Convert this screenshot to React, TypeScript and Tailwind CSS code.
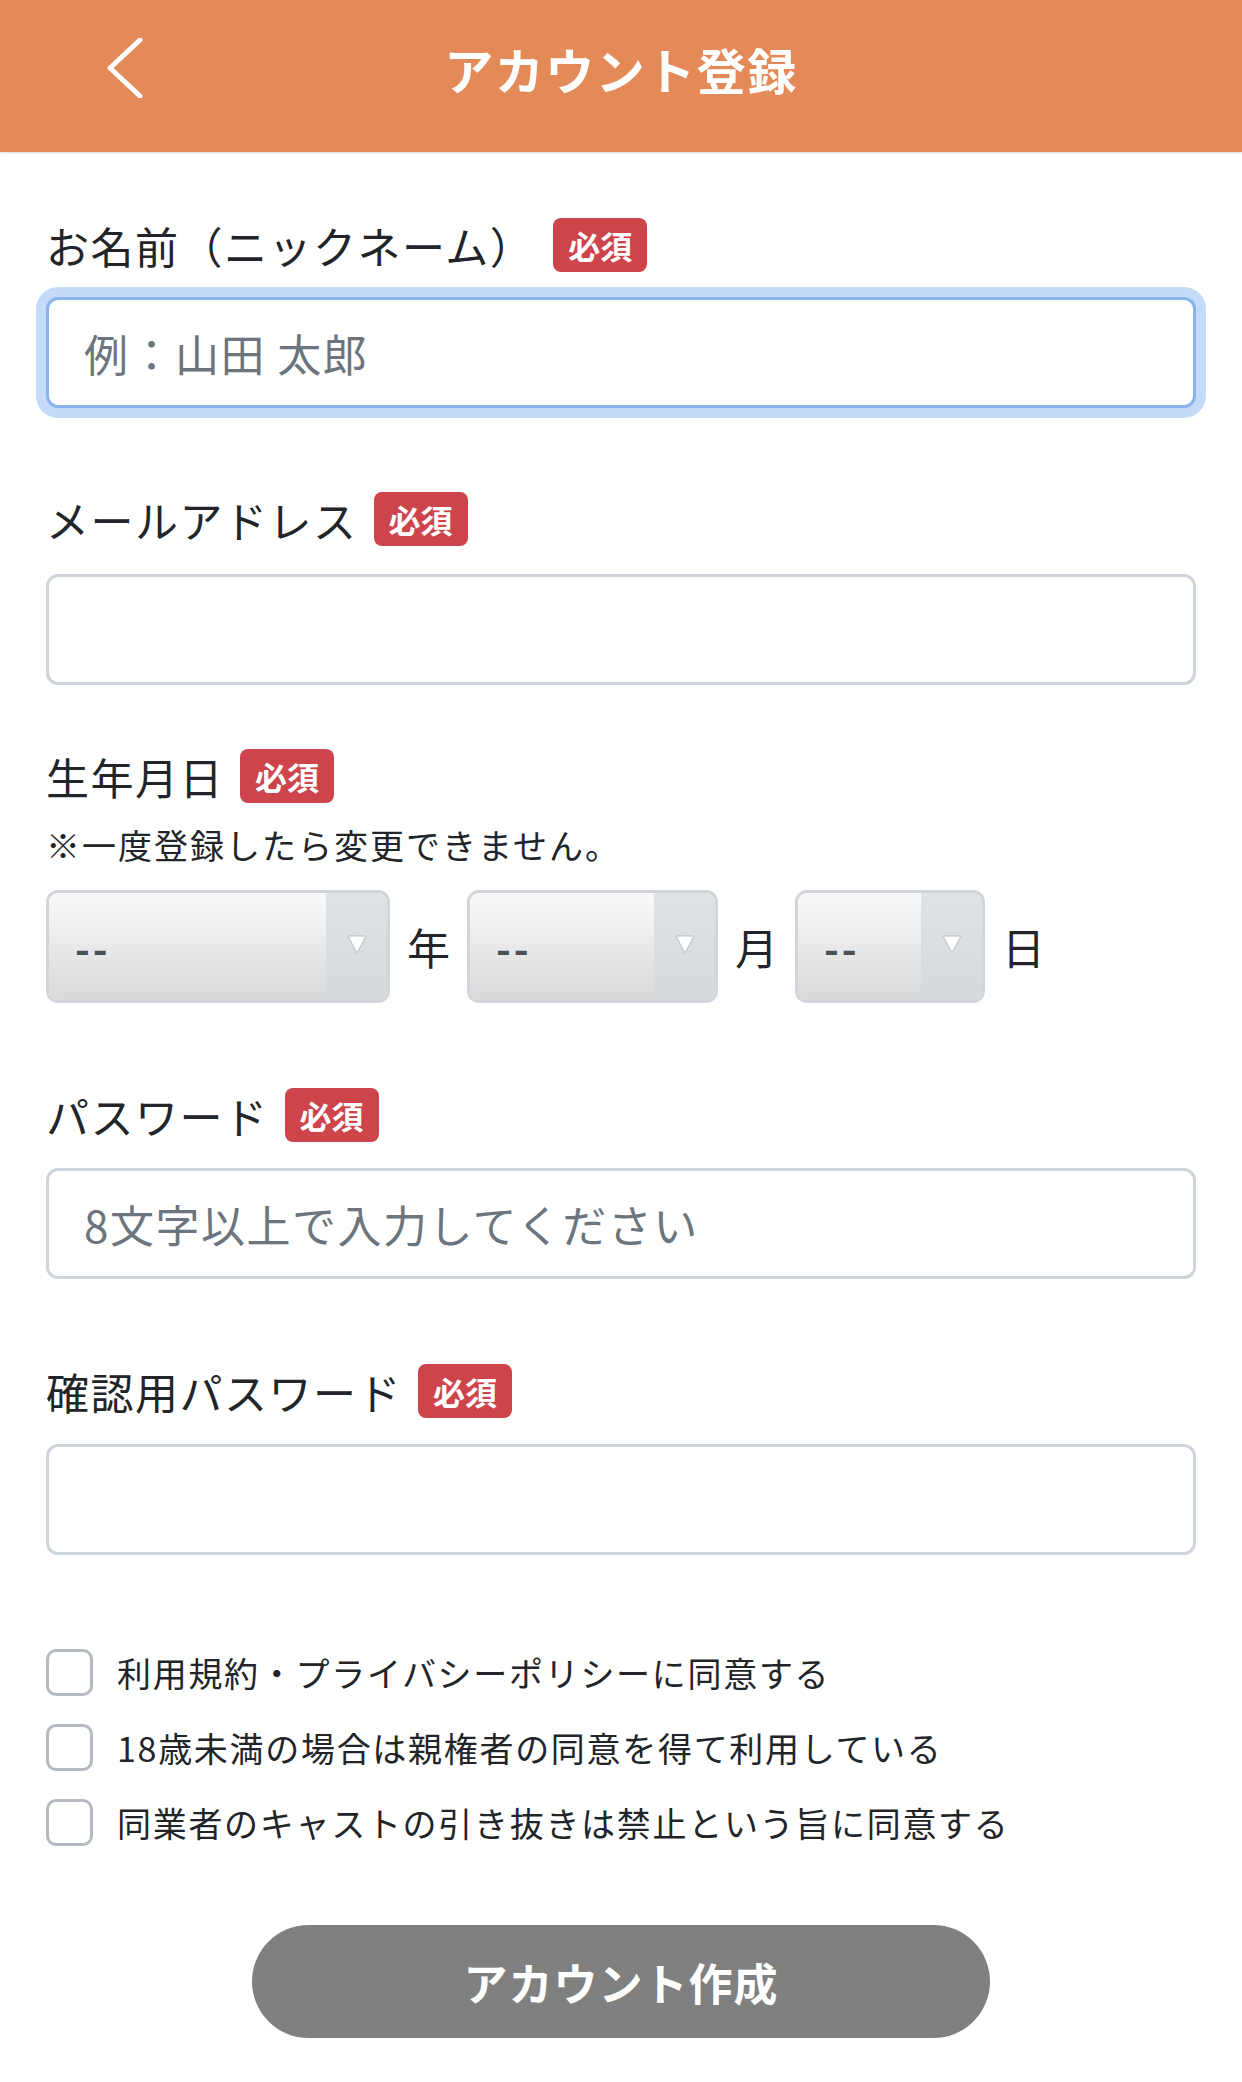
import React from 'react';

const font = "font-['Noto_Sans_CJK_JP','Noto_Sans',sans-serif]";

function Badge() {
  return (
    <span className="flex h-[54px] items-center rounded-[8px] bg-[#cd444b] px-[15px] text-[32px] font-bold leading-none text-white">
      必須
    </span>
  );
}

function Label({ text, extra }: { text: string; extra?: string }) {
  return (
    <div className="flex h-[54px] items-center gap-[16px]">
      <span className="text-[43px] leading-none tracking-[1.5px] text-[#212529]">{text}</span>
      <span className={extra}>
        <Badge />
      </span>
    </div>
  );
}

function TextInput({ placeholder, focused }: { placeholder?: string; focused?: boolean }) {
  return (
    <input
      type="text"
      placeholder={placeholder}
      className={
        focused
          ? 'h-[111px] w-full rounded-[12px] border-[3px] border-[#8ab4ee] bg-white px-[35px] text-[44px] tracking-[1.5px] text-[#212529] shadow-[0_0_0_10px_#c4dcfa] outline-none placeholder:text-[#6c757d]'
          : 'h-[111px] w-full rounded-[12px] border-[3px] border-[#ced4da] bg-white px-[35px] text-[44px] tracking-[1.5px] text-[#212529] outline-none placeholder:text-[#6c757d]'
      }
    />
  );
}

function Select({ width }: { width: string }) {
  return (
    <div className={`flex h-[113px] overflow-hidden rounded-[12px] border-[3px] border-[#d2d6db] ${width}`}>
      <div className="flex flex-1 items-center bg-gradient-to-b from-[#fafafa] to-[#d9d9d9] pl-[26px]">
        <span className="text-[40px] font-bold leading-none tracking-[3px] text-[#495057]">--</span>
      </div>
      <div className="flex w-[61px] items-start justify-center bg-gradient-to-b from-[#dfe2e6] to-[#d5d8dc] pt-[40px]">
        <svg width="22" height="22" viewBox="0 0 22 22">
          <path d="M2 3 L20 3 L11 20 Z" fill="#ffffff" stroke="#b9bec5" strokeWidth="1" strokeLinejoin="round" />
        </svg>
      </div>
    </div>
  );
}

function Check({ text }: { text: string }) {
  return (
    <label className="flex h-[47px] items-center gap-[24px]">
      <span className="h-[47px] w-[47px] shrink-0 rounded-[10px] border-[3px] border-[#b5bac1] bg-white" />
      <span className="text-[34px] leading-none tracking-[1.7px] text-[#212529]">{text}</span>
    </label>
  );
}

export default function App() {
  return (
    <div className={`min-h-[2082px] w-[1242px] bg-white ${font}`}>
      <header className="grid h-[152px] grid-cols-[1fr_auto_1fr] items-center bg-[#e48a58] pb-[16px] shadow-[0_1px_2px_rgba(0,0,0,0.15)]">
        <div className="pl-[104px]">
          <svg width="40" height="60" viewBox="0 0 40 60" className="block">
            <path d="M36 2 L6 30 L36 58" fill="none" stroke="#ffffff" strokeWidth="5" strokeLinecap="round" strokeLinejoin="round" />
          </svg>
        </div>
        <h1 className="text-[49px] font-bold leading-none tracking-[1.5px] text-white">アカウント登録</h1>
        <div />
      </header>

      <main className="px-[46px]">
        <div className="mt-[66px]">
          <Label text="お名前（ニックネーム）" extra="ml-[3px]" />
        </div>
        <div className="mt-[25px]">
          <TextInput placeholder="例：山田 太郎" focused />
        </div>

        <div className="mt-[84px]">
          <Label text="メールアドレス" />
        </div>
        <div className="mt-[28px]">
          <TextInput />
        </div>

        <div className="mt-[64px]">
          <Label text="生年月日" />
        </div>
        <p className="mt-[19px] text-[34px] leading-[46px] tracking-[2px] text-[#212529]">※一度登録したら変更できません。</p>
        <div className="mt-[22px] flex items-center gap-[17px]">
          <Select width="w-[344px]" />
          <span className="text-[43px] leading-none text-[#212529]">年</span>
          <Select width="w-[251px]" />
          <span className="text-[43px] leading-none text-[#212529]">月</span>
          <Select width="w-[190px]" />
          <span className="text-[43px] leading-none text-[#212529]">日</span>
        </div>

        <div className="mt-[85px]">
          <Label text="パスワード" />
        </div>
        <div className="mt-[26px]">
          <TextInput placeholder="8文字以上で入力してください" />
        </div>

        <div className="mt-[85px]">
          <Label text="確認用パスワード" />
        </div>
        <div className="mt-[26px]">
          <TextInput />
        </div>

        <div className="mt-[94px] flex flex-col gap-[28px]">
          <Check text="利用規約・プライバシーポリシーに同意する" />
          <Check text="18歳未満の場合は親権者の同意を得て利用している" />
          <Check text="同業者のキャストの引き抜きは禁止という旨に同意する" />
        </div>

        <div className="mt-[79px] flex justify-center pb-[44px]">
          <button className="h-[113px] w-[738px] rounded-full bg-[#808080] text-[44px] font-bold tracking-[1px] text-white">
            アカウント作成
          </button>
        </div>
      </main>
    </div>
  );
}
